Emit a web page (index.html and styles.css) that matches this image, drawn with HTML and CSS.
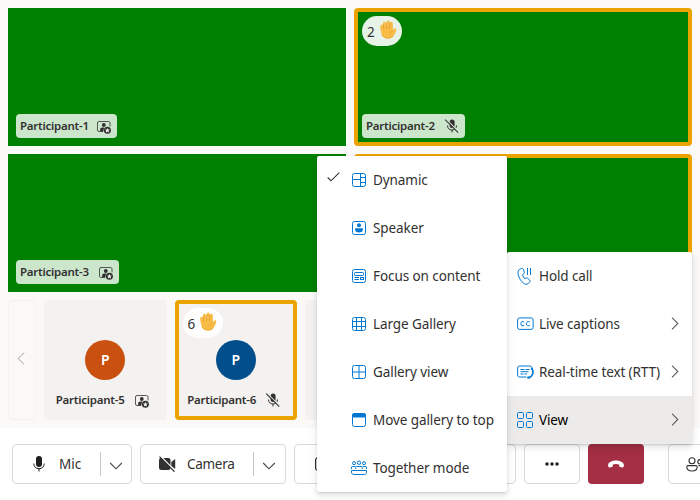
FILE: index.html
```html
<!DOCTYPE html>
<html lang="en">
<head>
<meta charset="utf-8">
<title>Call</title>
<link rel="stylesheet" href="styles.css">
</head>
<body>
<svg class="defs" width="0" height="0">
  <symbol id="hand" viewBox="0 0 17 19">
    <path d="M2.200 10.500L1.700 6.200M5 9L4.400 3.200M8.200 9V2M11.300 9V3.200" stroke="#f9bd47" stroke-width="3" stroke-linecap="round" fill="none"/>
    <path d="M.7 7.500L12.800 6v4.300l1.100-1.400c1-1.200 2.800-.4 2.400 1-.5 2.200-1.600 4.100-2.900 6-1.200 1.900-3 2.700-5.300 2.700-4.200 0-6.600-2.300-6.900-6z" fill="#f9bd47"/>
    <path d="M3.300 4.500L3.700 8.700M6.500 3L6.700 8.400M9.800 3V8.400M12.800 10.800c-1.900.6-2.900 2-2.900 3.700" stroke="#df9530" stroke-width=".7" stroke-linecap="round" fill="none"/>
    <path d="M2 14.500c1 2.500 3.200 3.500 6.200 3.500 2.200 0 3.900-.8 5-2.500" stroke="#eba53a" stroke-width=".8" fill="none"/>
  </symbol>
  <symbol id="spotlight" viewBox="0 0 14 13">
    <path d="M6 10.500H2A1.500 1.500 0 0 1 .5 9V2A1.500 1.500 0 0 1 2 .5h9.500A1.500 1.500 0 0 1 13 2v3.500" fill="none" stroke="#484644" stroke-width=".9"/>
    <circle cx="6.800" cy="4" r="1.900" fill="#323130"/>
    <path d="M3.200 10.500V8.500c0-1.200.8-1.900 2-1.900h2L6.200 10.500z" fill="#323130"/>
    <circle cx="10.400" cy="9.200" r="3.500" fill="#323130"/>
    <path d="M10.400 6.900l.7 1.500 1.700.2-1.200 1.200.3 1.700-1.500-.8-1.500.8.3-1.700L8 8.600l1.700-.2z" fill="#e9f1e9"/>
  </symbol>
  <symbol id="mic-off" viewBox="0 0 16 16">
    <rect x="5.600" y="1.500" width="5" height="8.500" rx="2.500" fill="#323130"/>
    <path d="M3.500 7.500c0 2.700 1.800 4.500 4.500 4.500s4.500-1.800 4.500-4.500M8 12v2.500" fill="none" stroke="#323130"/>
    <path d="M2 1.200l13 13" stroke="#dfe9df" stroke-width="1.300"/>
    <path d="M1.200 1.700l13 13" stroke="#323130" stroke-width="1.100"/>
  </symbol>
  <symbol id="chev-down" viewBox="0 0 14 8"><path d="M1.200 1L7 6.800 12.800 1" fill="none" stroke="#484644" stroke-width="1.100"/></symbol>
  <symbol id="chev-right" viewBox="0 0 8 13"><path d="M1 .7l5.800 5.800L1 12.300" fill="none" stroke="#605e5c" stroke-width="1.100"/></symbol>
</svg>

<main class="call">
  <section class="stage">
    <div class="grid">
      <div class="tile">
        <div class="label first"><span>Participant-1</span><svg class="i-spot"><use href="#spotlight"/></svg></div>
      </div>
      <div class="tile raised">
        <div class="hand"><span>2</span><svg><use href="#hand"/></svg></div>
        <div class="label"><span>Participant-2</span><svg class="i-mic"><use href="#mic-off"/></svg></div>
      </div>
      <div class="tile">
        <div class="label"><span>Participant-3</span><svg class="i-spot"><use href="#spotlight"/></svg></div>
      </div>
      <div class="tile raised"></div>
    </div>
    <div class="strip">
      <div class="prev"><svg width="8" height="13" viewBox="0 0 8 13"><path d="M7 .7L1.200 6.500 7 12.300" fill="none" stroke="#a19f9d"/></svg></div>
      <div class="card">
        <div class="avatar orange">P</div>
        <div class="name"><span>Participant-5</span><svg class="i-spot"><use href="#spotlight"/></svg></div>
      </div>
      <div class="card raised">
        <div class="hand"><span>6</span><svg><use href="#hand"/></svg></div>
        <div class="avatar blue">P</div>
        <div class="name"><span>Participant-6</span><svg class="i-mic"><use href="#mic-off"/></svg></div>
      </div>
      <div class="card"></div>
    </div>
  </section>

  <footer class="controls">
    <div class="btn mic">
      <svg width="12" height="16" viewBox="0 0 12 16"><rect x="3" y="0" width="6" height="11" rx="3" fill="#201f1e"/><path d="M.8 7.500c0 3.200 2 5.200 5.200 5.200s5.200-2 5.200-5.200M6 12.500v3" fill="none" stroke="#201f1e"/></svg>
      <span>Mic</span>
      <i></i><svg class="chev"><use href="#chev-down"/></svg>
    </div>
    <div class="btn camera">
      <svg width="17" height="16" viewBox="0 0 17 16"><rect x="0" y="2" width="11.500" height="12" rx="2.200" fill="#323130"/><path d="M12.300 6l3.900-3v10l-3.900-3z" fill="#323130"/><path d="M1.800 .5l15 15" stroke="#fff" stroke-width="1.400"/><path d="M.5 .7l15 15" stroke="#323130" stroke-width="1.200"/></svg>
      <span>Camera</span>
      <i></i><svg class="chev"><use href="#chev-down"/></svg>
    </div>
    <div class="btn share"><svg width="18" height="14" viewBox="0 0 18 14"><rect x=".6" y=".6" width="16.800" height="12.800" rx="2.500" fill="none" stroke="#323130" stroke-width="1.200"/></svg></div>
    <div class="btn more"><svg width="14" height="4" viewBox="0 0 14 4"><g fill="#201f1e"><circle cx="2" cy="2" r="1.750"/><circle cx="7" cy="2" r="1.750"/><circle cx="12" cy="2" r="1.750"/></g></svg></div>
    <div class="btn end"><svg width="16" height="8" viewBox="0 0 16 8"><path d="M8 .5c3.700 0 7.600 1.500 7.900 4.500.2 1.600-.4 2.600-1.700 2.400l-2-.4c-.7-.1-1-.6-1-1.300V4.500C9.300 3.800 6.700 3.800 4.800 4.500v1.200c0 .7-.3 1.200-1 1.300l-2 .4C.500 7.600-.1 6.600.1 5 .4 2 4.300.5 8 .5z" fill="#fff"/></svg></div>
    <div class="btn people"><svg width="22" height="15" viewBox="0 0 22 15"><g fill="none" stroke="#323130" stroke-width="1.100"><circle cx="6" cy="3.800" r="3"/><path d="M2.200 8.600h7.600c.8 0 1.400.6 1.400 1.400 0 2.700-2 4-5.200 4s-5.200-1.300-5.200-4c0-.8.600-1.400 1.400-1.400z"/><circle cx="14" cy="4.800" r="2.200"/><path d="M12.500 8.600H17c.8 0 1.300.5 1.300 1.300 0 1.800-1.600 3-4.300 3"/></g></svg></div>
  </footer>
</main>

<nav class="menu more-menu">
  <div class="item"><svg class="ic" viewBox="0 0 18 18"><path d="M4.600 1.500l-1.700.7C1 3 .6 5.200 1.200 7.500c.8 3.400 2.700 6.500 5.200 8.700 1.600 1.300 3.500 1.500 5 .2l1.200-1.300c.6-.7.600-1.600-.1-2.200l-1.800-1.600c-.5-.4-1.200-.5-1.800-.2l-1.300.5c-1-1-1.700-2.200-2-3.700l1.200-1.200c.4-.4.500-1 .4-1.500l-.6-2.500c-.200-.9-1.100-1.500-2-1.200zM10.500 1v7M13.500 1v7"/></svg><span>Hold call</span></div>
  <div class="item"><svg class="ic" viewBox="0 0 18 18"><rect x=".6" y="2.900" width="15.500" height="11.500" rx="2"/><path d="M7.300 7.100c-1.500-1.200-3.500-.3-3.500 1.600s2 2.800 3.500 1.600M12.900 7.100c-1.500-1.200-3.500-.3-3.500 1.600s2 2.800 3.500 1.600"/></svg><span>Live captions</span><svg class="arrow"><use href="#chev-right"/></svg></div>
  <div class="item"><svg class="ic" viewBox="0 0 18 18"><path d="M14.800 4.200c-.3-.8-1-1.200-1.800-1.200H2.600a2 2 0 0 0-2 2v7a2 2 0 0 0 2 2H9.500M3.500 6.500h4M8.500 6.500h4M3.500 8.700h8M3.500 11h3M7.500 11H10"/><path d="M15 5.500c2 3.500 1.200 7.700-3.200 9.200" stroke-width="1.600"/><path d="M14 5.800l2-.5M11.300 13.500l.3 2.200" stroke-width="2.400"/></svg><span>Real-time text (RTT)</span><svg class="arrow"><use href="#chev-right"/></svg></div>
  <div class="item active"><svg class="ic" viewBox="0 0 18 18"><rect x=".5" y="1.500" width="6" height="6" rx="1"/><rect x="9.500" y="1.500" width="6" height="6" rx="1"/><rect x=".5" y="10.500" width="6" height="6" rx="1"/><rect x="9.500" y="10.500" width="6" height="6" rx="1"/></svg><span>View</span><svg class="arrow"><use href="#chev-right"/></svg></div>
</nav>

<nav class="menu view-menu">
  <div class="item"><svg class="check" width="13" height="10" viewBox="0 0 13 10"><path d="M.7 5.500l3.300 3.300L12.300.7" fill="none" stroke="#323130" stroke-width="1.100"/></svg><svg class="ic" viewBox="0 0 18 18"><rect x="2.500" y="2.500" width="13" height="13" rx="2"/><path d="M10.500 2.500v13M2.500 8.500h8M10.500 6.500h5M10.500 11.500h5"/></svg><span>Dynamic</span></div>
  <div class="item"><svg class="ic" viewBox="0 0 18 18"><rect x="2.500" y="2.500" width="13" height="13" rx="2"/><circle cx="9" cy="6.300" r="2" class="fill"/><path class="fill" d="M6 9.200h6c.6 0 1 .4 1 1 0 2-1.700 3.300-4 3.300s-4-1.300-4-3.300c0-.6.400-1 1-1z"/></svg><span>Speaker</span></div>
  <div class="item"><svg class="ic" viewBox="0 0 18 18"><rect x="2.500" y="2.500" width="13" height="13" rx="2"/><rect x="4.500" y="5.500" width="9" height="3" rx=".8"/><path d="M4.500 10.500H9M4.500 12.500H9"/><rect x="10.500" y="10.500" width="3" height="2"/></svg><span>Focus on content</span></div>
  <div class="item"><svg class="ic" viewBox="0 0 18 18"><rect x="2.500" y="2.500" width="13" height="13" rx="2"/><path d="M6.500 2.500v13M11.500 2.500v13M2.500 6.500h13M2.500 11.500h13"/></svg><span>Large Gallery</span></div>
  <div class="item"><svg class="ic" viewBox="0 0 18 18"><rect x="2.500" y="2.500" width="13" height="13" rx="2"/><path d="M9 2.500v13M2.500 9h13"/></svg><span>Gallery view</span></div>
  <div class="item"><svg class="ic" viewBox="0 0 18 18"><rect x="2.500" y="2.500" width="13" height="13" rx="2"/><path class="fill" d="M2 6.500V4.300C2 3 3 2 4.300 2h9.400C15 2 16 3 16 4.300v2.200z"/></svg><span>Move gallery to top</span></div>
  <div class="item"><svg class="ic" viewBox="0 0 18 18"><circle cx="4" cy="4.200" r="1.500"/><circle cx="9" cy="3.700" r="1.700"/><circle cx="14" cy="4.200" r="1.500"/><path d="M1.500 10V8.300c0-.5.300-.8.800-.8h3M16.500 10V8.300c0-.5-.3-.8-.8-.8h-3M5.700 10V8.500c0-.6.400-1 1-1h4.600c.6 0 1 .4 1 1V10M1.500 11.500h15v1.700c0 1.300-.9 2.300-2.200 2.300H3.700c-1.300 0-2.200-1-2.200-2.300z"/></svg><span>Together mode</span></div>
</nav>
</body>
</html>
```

FILE: styles.css
```css
* { box-sizing: border-box; }
body {
  margin: 0;
  width: 700px;
  height: 500px;
  overflow: hidden;
  position: relative;
  background: #faf9f8;
  color: #323130;
  font: 13.500px/20px "Noto Sans", sans-serif;
}
svg { display: block; flex: none; }
.defs { position: absolute; }
.call { display: flex; flex-direction: column; height: 500px; }
.stage { height: 428px; padding: 8px; display: flex; flex-direction: column; gap: 8px; }
.grid { display: grid; grid-template-columns: 338px 338px; grid-template-rows: 138px 138px; gap: 8px; }
.tile {
  background: #008000;
  padding: 8px;
  display: flex;
  flex-direction: column;
  align-items: flex-start;
}
.raised { border: 4px solid #eaa300; border-radius: 4px; }
.tile.raised { padding: 4px; }
.label {
  margin-top: auto;
  width: 103px;
  height: 24px;
  padding: 0 4px;
  display: flex;
  align-items: center;
  border-radius: 4px;
  background: rgba(255, 255, 255, .8);
}
.label.first { width: 101px; }
.label, .name { font-size: 11.500px; line-height: 16px; font-weight: 600; letter-spacing: -.24px; }
.label span, .name span { width: 69px; white-space: nowrap; }
.label.first span { width: 67px; }
.i-spot { width: 14px; height: 13px; margin: 2px 6px 0 10px; }
.i-mic { width: 16px; height: 16px; margin: 0 3px 0 9px; }
.hand {
  width: 40px;
  height: 30px;
  padding: 0 4px 0 5px;
  display: flex;
  align-items: center;
  gap: 5px;
  border-radius: 15px;
  background: rgba(255, 255, 255, .9);
}
.hand span { padding-top: 2px; }
.hand svg { width: 17px; height: 19px; margin-top: -4px; }
.strip { display: flex; gap: 8px; height: 120px; }
.prev {
  width: 28px;
  flex: none;
  display: flex;
  align-items: center;
  justify-content: center;
  border: 1px solid #f3f2f1;
  border-radius: 4px;
}
.prev svg { margin: -3px 2px 0 0; }
.card {
  position: relative;
  width: 122.500px;
  flex: none;
  padding: 40px 0 0;
  display: flex;
  flex-direction: column;
  align-items: center;
  gap: 12px;
  background: #f3f2f1;
  border-radius: 4px;
}
.card.raised { padding-top: 36px; }
.card .hand { position: absolute; left: 4px; top: 4px; }
.avatar {
  width: 40px;
  height: 40px;
  border-radius: 50%;
  color: #fff;
  font-size: 14px;
  font-weight: 600;
  line-height: 39px;
  text-align: center;
}
.orange { background: #ca5010; }
.blue { background: #004e8c; }
.name { display: flex; align-items: center; }

.controls {
  height: 72px;
  padding: 16px 12px;
  display: flex;
  gap: 8px;
  background: #fff;
  overflow: hidden;
}
.btn {
  flex: none;
  height: 40px;
  display: flex;
  align-items: center;
  justify-content: center;
  border: 1px solid #d9d9d9;
  border-radius: 4px;
  background: #fff;
}
.mic, .camera { justify-content: flex-start; }
.mic { width: 120px; padding-left: 20px; }
.mic span { width: 41px; margin-left: 14px; }
.camera { width: 146px; padding-left: 18px; }
.camera span { width: 66px; margin-left: 11px; letter-spacing: -.3px; }
.btn i { width: 1px; height: 24px; background: #c8c6c4; }
.chev { width: 14px; height: 8px; margin: 4px 0 0 8px; }
.share { width: 222px; justify-content: flex-start; padding-left: 20px; }
.more { width: 56px; }
.end { width: 56px; border: 0; background: #a42e43; }
.people { width: 80px; margin-left: 16px; justify-content: flex-start; padding-left: 17px; }

.menu {
  position: absolute;
  background: #fff;
  border-radius: 2px;
  box-shadow: 0 3px 7px rgba(0, 0, 0, .13), 0 1px 2px rgba(0, 0, 0, .11);
}
.more-menu { left: 507px; top: 252px; width: 185px; }
.view-menu { left: 317px; top: 156px; width: 190px; }
.item { position: relative; height: 48px; display: flex; align-items: center; white-space: nowrap; }
.more-menu .item { padding: 0 13px 0 10px; }
.view-menu .item { padding-left: 33px; }
.view-menu .item span { margin-left: 5px; letter-spacing: -.08px; }
.more-menu .item span { margin-left: 4px; letter-spacing: -.11px; }
.ic { width: 18px; height: 18px; fill: none; stroke: #0078d4; stroke-width: 1; }
.fill { fill: #0078d4; stroke: none; }
.arrow { width: 8px; height: 13px; margin: -2px 0 0 auto; }
.check { position: absolute; left: 10px; top: 16px; }
.active { background: #edebe9; color: #000; }
```
